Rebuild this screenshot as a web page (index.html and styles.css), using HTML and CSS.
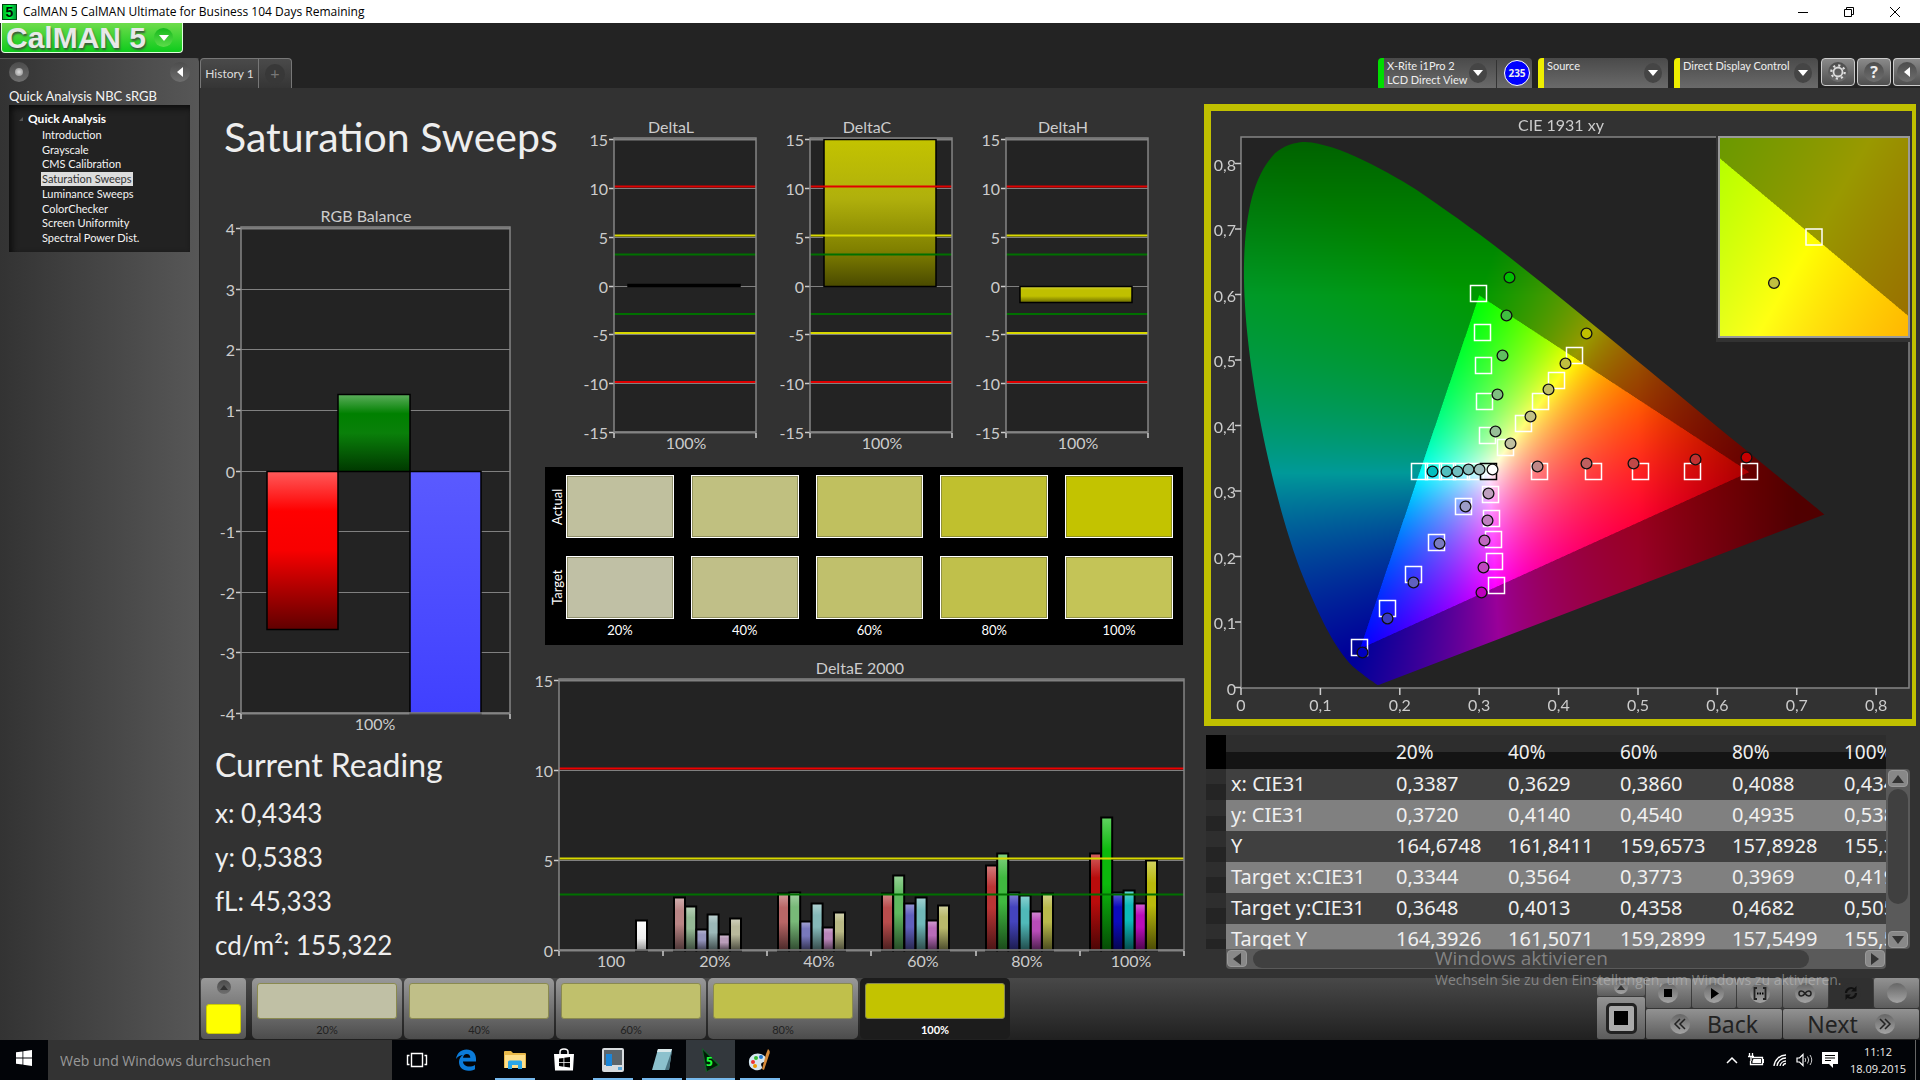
FILE: index.html
```html
<!DOCTYPE html>
<html lang="en">
<head>
    <meta charset="utf-8" />
    <meta name="viewport" content="width=device-width, initial-scale=1" />
    <title>CalMAN 5 CalMAN Ultimate for Business</title>
    <link rel="stylesheet" href="styles.css">
</head>
<body>
    <div class="titlebar">
        <span class="app-icon">5</span>
        <span class="titlebar-text">CalMAN 5 CalMAN Ultimate for Business 104 Days Remaining</span>
        <div class="window-buttons">
            <button aria-label="Minimize"><svg width="12" height="12" viewBox="0 0 12 12"><path d="M1 6.5h10" stroke="#000" fill="none"/></svg></button>
            <button aria-label="Restore"><svg width="12" height="12" viewBox="0 0 12 12"><path d="M1.5 3.5h7v7h-7zM3.5 3.5v-2h7v7h-2" stroke="#000" fill="none"/></svg></button>
            <button aria-label="Close"><svg width="12" height="12" viewBox="0 0 12 12"><path d="M1 1l10 10M11 1L1 11" stroke="#000" fill="none"/></svg></button>
        </div>
    </div>

    <div class="brand-row">
        <button class="brand">
            <span class="brand-name">CalMAN 5</span>
            <span class="brand-arrow"><i class="caret"></i></span>
        </button>
    </div>

    <div class="app">
        <aside class="sidebar">
            <div class="sidebar-top">
                <button class="round" aria-label="Pin"><i class="dot"></i></button>
                <button class="round" aria-label="Collapse"><i class="caret-left"></i></button>
            </div>
            <p class="sidebar-title">Quick Analysis NBC sRGB</p>
            <nav class="tree">
                <div class="tree-head"><i class="tree-mark"></i>Quick Analysis</div>
                <ul>
                    <li><a href="#">Introduction</a></li>
                    <li><a href="#">Grayscale</a></li>
                    <li><a href="#">CMS Calibration</a></li>
                    <li><a href="#" class="selected">Saturation Sweeps</a></li>
                    <li><a href="#">Luminance Sweeps</a></li>
                    <li><a href="#">ColorChecker</a></li>
                    <li><a href="#">Screen Uniformity</a></li>
                    <li><a href="#">Spectral Power Dist.</a></li>
                </ul>
            </nav>
        </aside>

        <div class="workspace">
            <div class="toolbar">
                <div class="tabs">
                    <button class="tab">History 1</button>
                    <button class="tab tab-add" aria-label="Add history"><span>+</span></button>
                </div>
                <div class="devices">
                    <div class="device device-meter">
                        <button class="device-button">X-Rite i1Pro 2<br>LCD Direct View</button>
                        <span class="drop"><i class="caret"></i></span>
                        <span class="level">235</span>
                    </div>
                    <div class="device device-source">
                        <select aria-label="Source"><option>Source</option></select>
                        <span class="drop"><i class="caret"></i></span>
                    </div>
                    <div class="device device-display">
                        <select aria-label="Display control"><option>Direct Display Control</option></select>
                        <span class="drop"><i class="caret"></i></span>
                    </div>
                    <button class="tool" aria-label="Settings"><span class="round">
                        <svg width="18" height="18" viewBox="0 0 18 18"><circle cx="9" cy="9" r="4.5" fill="none" stroke="#ddd" stroke-width="1.8"/><circle cx="9" cy="9" r="6.7" fill="none" stroke="#ddd" stroke-width="2.2" stroke-dasharray="2.2 3.06"/></svg>
                    </span></button>
                    <button class="tool tool-help" aria-label="Help"><span class="round">?</span></button>
                    <button class="tool tool-edge" aria-label="Collapse"><span class="round"><i class="caret-left"></i></span></button>
                </div>
            </div>

            <main class="content">
                <section class="col-left">
                    <h1>Saturation Sweeps</h1>
                    <svg class="chart" id="rgb-balance" viewBox="0 0 330 530"></svg>
                    <h2>Current Reading</h2>
                    <ul class="reading">
                        <li>x: 0,4343</li>
                        <li>y: 0,5383</li>
                        <li>fL: 45,333</li>
                        <li>cd/m²: 155,322</li>
                    </ul>
                </section>

                <section class="col-mid">
                    <div class="deltas">
                        <svg class="chart" id="delta-l" viewBox="0 0 196 345"></svg>
                        <svg class="chart" id="delta-c" viewBox="0 0 196 345"></svg>
                        <svg class="chart" id="delta-h" viewBox="0 0 196 345"></svg>
                    </div>
                    <div class="swatches">
                        <div class="swatch-labels">
                            <span>Actual</span>
                            <span>Target</span>
                        </div>
                        <div class="swatch-grid">
                            <div class="swatch a20"></div>
                            <div class="swatch a40"></div>
                            <div class="swatch a60"></div>
                            <div class="swatch a80"></div>
                            <div class="swatch a100"></div>
                            <div class="swatch t20"></div>
                            <div class="swatch t40"></div>
                            <div class="swatch t60"></div>
                            <div class="swatch t80"></div>
                            <div class="swatch t100"></div>
                        </div>
                        <div class="swatch-percents">
                            <span>20%</span>
                            <span>40%</span>
                            <span>60%</span>
                            <span>80%</span>
                            <span>100%</span>
                        </div>
                    </div>
                    <svg class="chart chart-de" id="delta-e" viewBox="0 0 656 315"></svg>
                </section>

                <section class="col-right">
                    <div class="cie">
                        <svg class="chart" id="cie" viewBox="0 0 701 608">
                            <foreignObject x="30" y="26" width="668" height="551"><canvas id="gamut" width="668" height="551"></canvas></foreignObject>
                            <rect x="505" y="24" width="196" height="207" fill="#323232"/>
                            <foreignObject x="508" y="26" width="190" height="200"><canvas id="gamut-zoom" width="190" height="200"></canvas></foreignObject>
                        </svg>
                    </div>

                    <div class="readings">
                        <div class="readings-view">
                            <table>
                                <thead>
                                    <tr><th class="mark"></th><th class="name"></th><th>20%</th><th>40%</th><th>60%</th><th>80%</th><th>100%</th></tr>
                                </thead>
                                <tbody>
                                    <tr><td class="mark"></td><td>x: CIE31</td><td>0,3387</td><td>0,3629</td><td>0,3860</td><td>0,4088</td><td>0,4343</td></tr>
                                    <tr><td class="mark"></td><td>y: CIE31</td><td>0,3720</td><td>0,4140</td><td>0,4540</td><td>0,4935</td><td>0,5383</td></tr>
                                    <tr><td class="mark"></td><td>Y</td><td>164,6748</td><td>161,8411</td><td>159,6573</td><td>157,8928</td><td>155,3220</td></tr>
                                    <tr><td class="mark"></td><td>Target x:CIE31</td><td>0,3344</td><td>0,3564</td><td>0,3773</td><td>0,3969</td><td>0,4193</td></tr>
                                    <tr><td class="mark"></td><td>Target y:CIE31</td><td>0,3648</td><td>0,4013</td><td>0,4358</td><td>0,4682</td><td>0,5053</td></tr>
                                    <tr><td class="mark"></td><td>Target Y</td><td>164,3926</td><td>161,5071</td><td>159,2899</td><td>157,5499</td><td>155,5820</td></tr>
                                </tbody>
                            </table>
                        </div>
                        <div class="vscroll">
                            <button aria-label="Scroll up"><i class="arrow-up"></i></button>
                            <span class="thumb"></span>
                            <button aria-label="Scroll down"><i class="arrow-down"></i></button>
                        </div>
                        <div class="hscroll">
                            <button aria-label="Scroll left"><i class="arrow-left"></i></button>
                            <span class="thumb"></span>
                            <button aria-label="Scroll right"><i class="arrow-right"></i></button>
                        </div>
                    </div>
                </section>
            </main>

            <footer class="bottom">
                <button class="current" aria-label="Current color"><span class="round small"><i class="arrow-up"></i></span><span class="current-color"></span></button>
                <div class="steps">
                    <button class="step"><span class="step-color t20"></span>20%</button>
                    <button class="step"><span class="step-color t40"></span>40%</button>
                    <button class="step"><span class="step-color t60"></span>60%</button>
                    <button class="step"><span class="step-color t80"></span>80%</button>
                    <button class="step active"><span class="step-color a100"></span>100%</button>
                </div>
                <div class="transport">
                    <div class="stop-col">
                        <button class="stop-small" aria-label="Expand"><span class="round small"><i class="arrow-up"></i></span></button>
                        <button class="stop-big" aria-label="Stop all"><span><i></i></span></button>
                    </div>
                    <div class="transport-main">
                        <div class="keys">
                            <button aria-label="Stop"><span class="round"><svg width="20" height="20" viewBox="0 0 20 20"><path d="M6 6h8v8H6z"/></svg></span></button>
                            <button aria-label="Play"><span class="round"><svg width="20" height="20" viewBox="0 0 20 20"><path d="M7 5l8 5.500-8 5.500z"/></svg></span></button>
                            <button aria-label="Read series"><span class="round"><svg width="20" height="20" viewBox="0 0 20 20"><path d="M7 5H4.500v11H7M13 5h2.500v11H13" fill="none" stroke="#222" stroke-width="1.8"/><path d="M7 9.500h1.500v2H7zM9.500 9.500H11v2H9.500zM12 9.500h1.500v2H12z"/></svg></span></button>
                            <button aria-label="Read continuous"><span class="round"><svg width="20" height="20" viewBox="0 0 20 20"><path d="M10 10.500C8 7.500 4 7 4 10.500S8 13.500 10 10.500 16 7 16 10.500 12 13.500 10 10.500z" fill="none" stroke="#222" stroke-width="1.6"/></svg></span></button>
                            <button class="pressed" aria-label="Refresh"><span class="round"><svg width="20" height="20" viewBox="0 0 20 20"><path d="M5 10a5 5 0 0 1 8.500-3.500M15 10a5 5 0 0 1-8.500 3.500" fill="none" stroke="#111" stroke-width="2.2"/><path d="M15.500 3v5.500H10zM4.500 17v-5.500H10z" fill="#111"/></svg></span></button>
                            <button aria-label="Blank"><span class="round"></span></button>
                        </div>
                        <div class="keys nav-keys">
                            <button><span class="round"><svg width="18" height="18" viewBox="0 0 18 18"><path d="M9 4L4 9l5 5M14 4L9 9l5 5" fill="none" stroke="#222" stroke-width="1.5"/></svg></span>Back</button>
                            <button>Next<span class="round"><svg width="18" height="18" viewBox="0 0 18 18"><path d="M4 4l5 5-5 5M9 4l5 5-5 5" fill="none" stroke="#222" stroke-width="1.5"/></svg></span></button>
                        </div>
                    </div>
                </div>
            </footer>
        </div>
    </div>

    <div class="watermark">
        <strong>Windows aktivieren</strong>
        <span>Wechseln Sie zu den Einstellungen, um Windows zu aktivieren.</span>
    </div>

    <div class="taskbar">
        <button class="start" aria-label="Start"><svg width="16" height="16" viewBox="0 0 16 16"><path d="M0 2.300L6.500 1.400v6.200H0zM7.300 1.300L16 0v7.600H7.300zM0 8.400h6.500v6.200L0 13.700zM7.300 8.400H16V16l-8.700-1.300z" fill="#fff"/></svg></button>
        <input class="search" type="text" placeholder="Web und Windows durchsuchen" aria-label="Web und Windows durchsuchen">
        <div class="task-icons">
            <button aria-label="Task view"><svg width="22" height="16" viewBox="0 0 22 16"><path d="M5.500 1.500h11v13h-11zM3.500 3.500h-2v9h2M18.500 3.500h2v9h-2" fill="none" stroke="#fff" stroke-width="1.4"/></svg></button>
            <button aria-label="Edge"><svg width="22" height="22" viewBox="0 0 22 22"><path d="M1 10C2 4 6 .5 11.500.5 17.500.5 21 4.500 21 10v2.500H8c.2 3.500 3 5 6.200 5 2.200 0 4-.6 5.800-1.600v4.300c-2 1-4.200 1.500-6.700 1.500C7.500 21.700 4 18 4 13c0-3 1.500-5.500 4-7C5 6.300 2.500 7.800 1 10zm7-1.200h7.300C15.300 6.500 14 5 11.800 5S8.300 6.500 8 8.800z" fill="#0b7bd8"/></svg></button>
            <button class="open" aria-label="Explorer"><svg width="22" height="20" viewBox="0 0 22 20"><path d="M0 2q0-1 1-1h6l2 2h12q1 0 1 1v14H0z" fill="#e8b94a"/><path d="M1 5h20v13H1z" fill="#fddf8b"/><path d="M4 19v-7q0-1.500 1.500-1.500h11Q18 10.500 18 12v7h-4v-4H8v4z" fill="#2ba7e8"/></svg></button>
            <button aria-label="Store"><svg width="22" height="24" viewBox="0 0 22 24"><path d="M7 7V4q0-3 4-3t4 3v3" fill="none" stroke="#fff" stroke-width="1.5"/><path d="M1 6h20l-1 16.500H2z" fill="#fff"/><path d="M6 10.500l4.500-.6v4H6zM11.300 9.800L17 9v4.900h-5.700zM6 14.700h4.500v4L6 18.100zM11.300 14.700H17v4.900l-5.700-.8z" fill="#000"/></svg></button>
            <button class="open" aria-label="Device"><svg width="22" height="24" viewBox="0 0 22 24"><rect width="22" height="24" rx="2" fill="#d8dcdf"/><path d="M2 2h18v15H2z" fill="#5c656b"/><path d="M4 6h6v12H4z" fill="#1c86d8"/><path d="M12 20h3M16 19h4v3h-4z" fill="#5aa9dc"/></svg></button>
            <button class="open" aria-label="Notepad"><svg width="22" height="24" viewBox="0 0 22 24"><path d="M7 1h14l-3 21H1z" fill="#8cc1cd"/><path d="M7 1h14l-1 3H6z" fill="#d9e8ea"/><path d="M21 2l-3 20h-4z" fill="#4a7380"/></svg></button>
            <button class="open focused" aria-label="CalMAN"><svg width="22" height="24" viewBox="0 0 22 24"><path d="M2 0l18 17-14 7z" fill="#0a6a24"/><path d="M3 2l15 15-11 6z" fill="#021c08"/><text x="6" y="18" font-size="12" font-weight="bold" fill="#1fff3a">5</text></svg></button>
            <button class="open" aria-label="Paint"><svg width="24" height="24" viewBox="0 0 24 24"><path d="M1 15C0 8 7 4 13 6s7 7 3 8-3 3-2 5-5 5-9 2q-4-2-4-6z" fill="#d5e6f0"/><circle cx="5" cy="14" r="2" fill="#e33"/><circle cx="8" cy="10" r="2" fill="#3b3"/><circle cx="13" cy="9" r="2" fill="#27c"/><circle cx="7" cy="18" r="2" fill="#e90"/><path d="M20 1q3 2 1 6l-5 15-2-1 4-15z" fill="#d68b3a"/></svg></button>
        </div>
        <div class="tray">
            <svg width="12" height="8" viewBox="0 0 12 8"><path d="M1 7l5-5 5 5" fill="none" stroke="#fff" stroke-width="1.5"/></svg>
            <svg width="17" height="14" viewBox="0 0 17 14"><path d="M5 4.500h10.500v7H3.500V8M2.500 0v3M5.500 0v3M1 3.500h6M4 4v4" fill="none" stroke="#fff" stroke-width="1.3"/><path d="M6.500 6h7.500v4H5.500V8z" fill="#fff"/><path d="M16 6h1v4h-1z" fill="#fff"/></svg>
            <svg width="14" height="14" viewBox="0 0 14 14"><path d="M1 13A12 12 0 0 1 13 2M4 13a9 9 0 0 1 9-8M7 13a6 6 0 0 1 6-5M10 13a3 3 0 0 1 3-2.500" fill="none" stroke="#fff" stroke-width="1.3"/></svg>
            <svg width="17" height="14" viewBox="0 0 17 14"><path d="M1 5h2.500L7 1.500v11L3.500 9H1z" fill="none" stroke="#fff" stroke-width="1.2"/><path d="M9 5q1.500 2 0 4M11.500 3.500q2.500 3.500 0 7M14 2q3.500 5 0 10" fill="none" stroke="#ccc"/></svg>
            <svg width="16" height="16" viewBox="0 0 16 16"><path d="M0 0h16v12h-5v4l-4-4H0z" fill="#fff"/><path d="M3 3.500h10M3 6h10M3 8.500h6" stroke="#000" stroke-width="1.2"/></svg>
            <div class="clock">11:12<br>18.09.2015</div>
            <span class="show-desktop"></span>
        </div>
    </div>

    <script src="charts.js"></script>
</body>
</html>
```
FILE: styles.css
```css
* {
    box-sizing: border-box;
}

body {
    margin: 0;
    min-height: 100vh;
    display: flex;
    flex-direction: column;
    background: #232323;
    color: #eee;
    font-family: Lato, "Open Sans", sans-serif;
    font-size: 12px;
}

button,
select,
input {
    font: inherit;
    color: inherit;
    border: 0;
    padding: 0;
    background: none;
}

h1,
h2,
p,
ul {
    margin: 0;
    padding: 0;
    font-weight: 400;
    list-style: none;
}

a {
    color: inherit;
    text-decoration: none;
}

canvas {
    display: block;
}

/* window title */
.titlebar {
    height: 23px;
    display: flex;
    align-items: center;
    background: #fff;
    color: #000;
    font-family: "Open Sans", sans-serif;
}

.app-icon {
    width: 15px;
    height: 16px;
    margin: 0 6px 0 2px;
    background: linear-gradient(90deg, #0b2, #0f4, #093);
    border: 1px solid #041;
    color: #010;
    font: bold 14px/14px "Liberation Sans", sans-serif;
    text-align: center;
}

.window-buttons {
    margin: 0 2px 0 auto;
    display: flex;
}

.window-buttons button {
    width: 46px;
    height: 23px;
    display: flex;
    align-items: center;
    justify-content: center;
}

/* shared shapes */
.caret {
    border: 5px solid transparent;
    border-top: 6px solid #fff;
    border-bottom: 0;
}

.caret-left {
    border: 5px solid transparent;
    border-right: 6px solid #fff;
    border-left: 0;
}

.round {
    width: 20px;
    height: 20px;
    border-radius: 50%;
    display: flex;
    align-items: center;
    justify-content: center;
    background: linear-gradient(#4c4c4c, #6e6e6e);
}

.round.small {
    width: 14px;
    height: 14px;
}

.arrow-up,
.arrow-down {
    border: 6px solid transparent;
}

.arrow-up {
    border-bottom: 8px solid #333;
    border-top: 0;
}

.arrow-down {
    border-top: 8px solid #333;
    border-bottom: 0;
}

.arrow-left,
.arrow-right {
    border: 6px solid transparent;
}

.arrow-left {
    border-right: 8px solid #333;
    border-left: 0;
}

.arrow-right {
    border-left: 8px solid #333;
    border-right: 0;
}

.small .arrow-up {
    border-width: 0 4px 5px;
}

/* brand */
.brand-row {
    height: 35px;
}

.brand {
    width: 182px;
    height: 30px;
    margin-left: 1px;
    padding: 0 9px 0 4px;
    display: flex;
    align-items: center;
    justify-content: space-between;
    background: linear-gradient(#6fdc4c, #0ecb1c);
    border: 1px solid #dfffdc;
    border-top: 0;
    border-radius: 0 0 4px 4px;
}

.brand-name {
    font: bold 30px/28px "Liberation Sans", sans-serif;
    color: #e8e8e8;
    text-shadow: 1px 2px 2px #3a5a3a;
}

.brand-arrow {
    width: 19px;
    height: 19px;
    border-radius: 50%;
    background: linear-gradient(#14b81c, #5ddc4a);
    display: flex;
    align-items: center;
    justify-content: center;
}

.app {
    flex: 1;
    display: flex;
}

/* sidebar */
.sidebar {
    width: 200px;
    flex: none;
    padding: 0 9px;
    background: linear-gradient(90deg, #333, #575757);
    border-right: 1px solid #222;
    border-top: 1px solid #555;
    border-top-right-radius: 4px;
}

.sidebar-top {
    display: flex;
    justify-content: space-between;
    height: 28px;
    padding-top: 3px;
}

.dot {
    width: 8px;
    height: 8px;
    border-radius: 50%;
    background: radial-gradient(#ddd, #888);
}

.sidebar-title {
    font-size: 13px;
    line-height: 18px;
    color: #f4f4f4;
}

.tree {
    height: 147px;
    padding: 5px 0 0 10px;
    background: #222;
    box-shadow: inset 3px 3px 6px #0c0c0c;
}

.tree-head {
    display: flex;
    align-items: center;
    gap: 5px;
    font-weight: 700;
    line-height: 18px;
    color: #fff;
}

.tree-mark {
    border: 2px solid #555;
    border-left-color: transparent;
    border-top-color: transparent;
}

.tree ul {
    height: 117px;
    padding-left: 22px;
    display: flex;
    flex-direction: column;
    justify-content: space-between;
}

.tree li {
    height: 14px;
    line-height: 14px;
    font-size: 11px;
}

.tree a {
    display: inline-block;
    padding: 0 1px;
    color: #f4f4f4;
}

.tree .selected {
    background: #ddd;
    color: #333;
}

/* toolbar */
.workspace {
    flex: 1;
    min-width: 0;
    display: flex;
    flex-direction: column;
}

.toolbar {
    height: 30px;
    display: flex;
    justify-content: space-between;
}

.tabs,
.devices {
    display: flex;
}

.tab {
    width: 59px;
    background: linear-gradient(#4a4a4a, #353535);
    border: 1px solid #777;
    border-bottom: 0;
    border-radius: 4px 0 0 0;
    color: #ddd;
}

.tab-add {
    width: 33px;
    border-left: 0;
    border-radius: 0 4px 0 0;
    color: #777;
    font-size: 16px;
}

.tab-add span {
    display: inline-block;
    width: 20px;
    height: 20px;
    line-height: 18px;
    border-radius: 50%;
    background: #383838;
}

.device {
    display: flex;
    align-items: center;
    margin-right: 6px;
    padding-left: 3px;
    border-left: 6px solid #ee0;
    border-radius: 4px 4px 0 0;
    background: linear-gradient(#4a4a4a, #6a6a6a);
}

.device-meter {
    width: 154px;
    border-left-color: #0d0;
}

.device-source {
    width: 130px;
}

.device-display {
    width: 144px;
    margin-right: 3px;
}

.device-button,
.device select {
    flex: 1;
    min-width: 0;
    height: 28px;
    text-align: left;
    font-size: 11px;
    line-height: 14px;
    white-space: nowrap;
    appearance: none;
}

.device select {
    padding-bottom: 14px;
}

.device .drop {
    width: 18px;
    height: 20px;
    margin-right: 6px;
    border-radius: 50%;
    background: #454545;
    display: flex;
    align-items: center;
    justify-content: center;
}

.device-meter .drop {
    margin-right: 10px;
}

.level {
    width: 26px;
    height: 26px;
    margin-right: 2px;
    border: 1px solid #fff;
    border-radius: 50%;
    background: #00f;
    font: bold 10px/24px "Open Sans", sans-serif;
    text-align: center;
}

/* divider between the meter menu and its level */
.device-meter .level {
    margin-left: 7px;
    outline: 0;
}

.device-meter {
    background: linear-gradient(#333, #333) 112px 2px / 1px 28px no-repeat, linear-gradient(#4a4a4a, #6a6a6a);
}

.tool {
    width: 34px;
    height: 28px;
    margin-right: 2px;
    display: flex;
    align-items: center;
    justify-content: center;
    background: linear-gradient(#8a8a8a, #4e4e4e);
    border: 1px solid #ccc;
    border-radius: 4px;
    font: bold 16px "Open Sans", sans-serif;
}

.tool-edge {
    width: 27px;
    margin-right: 0;
    border-right: 0;
    border-radius: 4px 0 0 4px;
}

/* content */
.content {
    flex: 1;
    display: grid;
    grid-template-columns: minmax(0, 330fr) minmax(0, 674fr) minmax(0, 716fr);
    background: #323232;
}

.chart {
    display: block;
    width: 100%;
    fill: #ccc;
    font-size: 16px;
}

.col-left,
.col-mid {
    padding-top: 22px;
}

h1 {
    margin: 0 0 40px 24px;
    font-size: 41px;
    line-height: 54px;
    white-space: nowrap;
}

h2 {
    margin: 9px 0 4px 15px;
    font-size: 32px;
    line-height: 44px;
}

.reading {
    margin-left: 15px;
    font-size: 26px;
    line-height: 44px;
}

.col-mid {
    padding-right: 18px;
}

.deltas {
    display: flex;
    padding: 0 16px 0 52px;
}

.deltas .chart {
    flex: 1;
    min-width: 0;
}

.swatches {
    height: 178px;
    margin: 12px 3px 0 15px;
    padding: 8px 10px 0 0;
    display: grid;
    grid-template-columns: 21px 1fr;
    grid-template-rows: 144px 26px;
    background: #000;
    color: #fff;
    font-size: 13px;
}

.swatch-labels {
    display: flex;
    flex-direction: column;
    gap: 18px;
}

.swatch-labels span {
    height: 63px;
    writing-mode: vertical-rl;
    transform: rotate(180deg);
    text-align: center;
    line-height: 25px;
}

.swatch-grid,
.swatch-percents {
    display: grid;
    grid-template-columns: repeat(5, 1fr);
    column-gap: 17px;
}

.swatch-grid {
    grid-template-rows: 63px 63px;
    row-gap: 18px;
}

.swatch-percents {
    grid-column: 2;
    line-height: 22px;
    text-align: center;
}

.swatch {
    border: 1px solid #fff;
    box-shadow: inset 0 0 0 1px rgba(100, 100, 60, 0.5);
}

.a20 { background: #c0c09e; }
.a40 { background: #c0c080; }
.a60 { background: #c0c05f; }
.a80 { background: #c0c02e; }
.a100 { background: #c3c300; }
.t20 { background: #c0c0a5; }
.t40 { background: #c0bf88; }
.t60 { background: #c0c06c; }
.t80 { background: #c0c04b; }
.t100 { background: #c4c457; }

.chart-de {
    margin-top: 10px;
}

/* cie */
.col-right {
    padding: 16px 4px 0 0;
}

.cie {
    border: 7px solid #c0c000;
    border-right-width: 4px;
}

/* readings table */
.readings {
    margin: 9px 6px 0 2px;
    display: grid;
    grid-template-columns: minmax(0, 1fr) 24px;
}

.readings-view {
    height: 214px;
    overflow: hidden;
}

.readings table {
    width: 745px;
    table-layout: fixed;
    border-collapse: collapse;
    font: 20px/30px "Noto Sans", sans-serif;
    color: #f0f0f0;
}

.readings th,
.readings td {
    height: 31px;
    padding: 0 0 1px 5px;
    text-align: left;
    font-weight: 400;
    white-space: nowrap;
}

.readings th {
    width: 112px;
    height: 34px;
    font-size: 19px;
    background: linear-gradient(#2d2d2d 50%, #141414 50%);
}

.readings th.name {
    width: 165px;
}

.readings th.mark {
    width: 20px;
    background: #000;
}

.readings tbody tr {
    background: #404040;
}

.readings tbody tr:nth-child(even) {
    background: #808080;
}

.readings td.mark {
    background: linear-gradient(#2e2e2e 50%, #242424 50%);
}

.vscroll,
.hscroll {
    display: flex;
    justify-content: space-between;
    background: #5a5a5a;
}

.vscroll {
    flex-direction: column;
    margin-top: 34px;
    padding: 1px 2px;
    border-radius: 0 4px 4px 0;
}

.hscroll {
    height: 20px;
    margin-left: 20px;
    padding: 1px;
    border-radius: 0 0 4px 4px;
}

.vscroll button,
.hscroll button {
    width: 20px;
    height: 17px;
    display: flex;
    align-items: center;
    justify-content: center;
    background: #888;
    border: 1px solid #999;
    border-radius: 4px;
}

.vscroll .thumb {
    width: 20px;
    height: 115px;
    margin-bottom: 26px;
    border-radius: 10px;
    background: #404040;
}

.hscroll .thumb {
    flex: 1;
    margin: 0 56px 0 6px;
    border-radius: 10px;
    background: #404040;
}

/* bottom bar */
.bottom {
    height: 62px;
    display: flex;
    padding: 0 1px 1px;
    background: linear-gradient(#484848, #202020);
}

.current {
    width: 45px;
    display: flex;
    flex-direction: column;
    align-items: center;
    gap: 10px;
    padding-top: 2px;
    background: linear-gradient(#999, #555);
    border-radius: 4px;
}

.current-color {
    width: 35px;
    height: 30px;
    border: 1px solid #cc0;
    border-radius: 3px;
    background: #ff0;
}

.steps {
    flex: 1;
    display: flex;
    gap: 2px;
    margin-left: 6px;
}

.step {
    width: 150px;
    padding: 5px 5px 0;
    background: linear-gradient(#999, #4c4c4c);
    border-radius: 5px;
    color: #222;
    font-size: 11px;
    line-height: 18px;
}

.step.active {
    background: #1c1c1c;
    color: #fff;
    font-weight: 700;
}

.step-color {
    display: block;
    height: 36px;
    margin-bottom: 2px;
    border: 1px solid #8a8a50;
    border-radius: 3px;
}

.transport,
.keys {
    display: flex;
    gap: 1px;
}

.stop-col,
.transport-main {
    display: flex;
    flex-direction: column;
    gap: 1px;
}

.stop-col {
    width: 48px;
}

.transport-main {
    width: 273px;
}

.transport button {
    display: flex;
    align-items: center;
    justify-content: center;
    background: linear-gradient(#929292, #5c5c5c);
    border-radius: 2px;
    color: #222;
}

.stop-small {
    height: 18px;
}

.stop-big {
    height: 42px;
}

.stop-big span {
    width: 31px;
    height: 31px;
    display: flex;
    align-items: center;
    justify-content: center;
    border: 3px solid #222;
    border-radius: 5px;
    background: #aaa;
}

.stop-big i {
    width: 14px;
    height: 14px;
    background: #000;
}

.keys {
    height: 30px;
}

.keys button {
    flex: 1;
}

.transport .round {
    background: linear-gradient(#666, #a4a4a4);
}

.transport .pressed,
.transport .pressed .round {
    background: #303030;
}

.keys.nav-keys button {
    gap: 17px;
    font: 23px "Noto Sans", sans-serif;
}

/* watermark over the window */
.watermark {
    position: absolute;
    right: 76px;
    bottom: 90px;
    width: 409px;
    color: rgba(190, 190, 190, 0.55);
    font-family: "Open Sans", sans-serif;
    font-size: 14px;
    line-height: 20px;
    white-space: nowrap;
    pointer-events: none;
}

.watermark strong {
    display: block;
    font-size: 19px;
    font-weight: 400;
    line-height: 24px;
}

/* taskbar */
.taskbar {
    height: 40px;
    display: flex;
    background: #020408;
    font-family: "Open Sans", sans-serif;
}

.start {
    width: 48px;
}

.search {
    width: 344px;
    padding-left: 12px;
    background: #333;
    font-size: 14px;
}

.search::placeholder {
    color: #999;
}

.task-icons {
    display: flex;
}

.task-icons button {
    width: 49px;
    display: flex;
    align-items: center;
    justify-content: center;
}

.task-icons .open {
    background: linear-gradient(#76b9ed, #76b9ed) center bottom / 40px 2px no-repeat;
}

.task-icons .focused {
    background: linear-gradient(#76b9ed, #76b9ed) center bottom / 49px 2px no-repeat #33383d;
}

.tray {
    margin-left: auto;
    display: flex;
    align-items: center;
    gap: 9px;
}

.clock {
    width: 62px;
    margin: 0 6px 0 0;
    line-height: 17px;
    font-size: 11px;
    text-align: center;
}

.show-desktop {
    width: 5px;
    height: 40px;
    margin-left: -9px;
    border-left: 1px solid #666;
}
```
FILE: charts.js
```js
const NS = 'http://www.w3.org/2000/svg';

function add(parent, tag, attrs, text) {
    const el = document.createElementNS(NS, tag);
    for (const key in attrs) el.setAttribute(key, attrs[key]);
    if (text !== undefined) el.textContent = text;
    parent.appendChild(el);
    return el;
}

function line(svg, x1, y1, x2, y2, color, width) {
    add(svg, 'line', { x1, y1, x2, y2, stroke: color, 'stroke-width': width || 1 });
}

let gradientId = 0;

function glossy(svg, stops) {
    const id = 'bar' + gradientId++;
    const g = add(svg, 'linearGradient', { id, x1: 0, y1: 0, x2: 0, y2: 1 });
    stops.forEach(([offset, color]) => add(g, 'stop', { offset, 'stop-color': color }));
    return 'url(#' + id + ')';
}

function shade(hex, k) {
    const n = [1, 3, 5].map(i => parseInt(hex.substr(i, 2), 16));
    return 'rgb(' + n.map(v => Math.round(k > 0 ? v + (255 - v) * k : v * (1 + k))).join(',') + ')';
}

function fade(color) {
    return [[0, shade(color, 0.35)], [0.25, color], [0.5, color], [1, shade(color, -0.6)]];
}

function drawChart(id, o) {
    const svg = document.getElementById(id);
    const { left, right, top, bottom } = o.plot;
    const y = v => Math.round(bottom - (v - o.min) / (o.max - o.min) * (bottom - top)) + 0.5;

    add(svg, 'text', { x: o.titleX, y: top - 6, 'text-anchor': 'middle' }, o.title);
    add(svg, 'rect', { x: left, y: top - 1, width: right - left, height: bottom - top + 1, fill: '#232323' });
    for (let v = o.min; v <= o.max; v += o.step) {
        line(svg, left, y(v), right, y(v), '#808080', v === o.min || v === o.max ? 2 : 1);
        line(svg, left - 5, y(v), left, y(v), '#ccc', 1.5);
        add(svg, 'text', { x: left - 6, y: y(v) + 6, 'text-anchor': 'end' }, v);
    }
    o.bars.forEach(b => {
        const y1 = Math.max(y(b.to), top - 0.5);
        const y2 = Math.max(y(b.from || 0), y1 + 1);
        add(svg, 'rect', {
            x: b.x, y: y1, width: b.w, height: y2 - y1,
            fill: glossy(svg, b.stops), stroke: '#000', 'stroke-width': b.w > 20 ? 1.5 : 2
        });
    });
    (o.limits || []).forEach(([v, color]) => {
        const ly = y(v) - (v > 0 ? 2 : 1.5);
        line(svg, left, ly, right, ly, color, 2);
    });
    add(svg, 'rect', { x: left, y: top - 1, width: right - left, height: bottom - top + 1, fill: 'none', stroke: '#858585', 'stroke-width': 1.5 });
    o.ticks.forEach(x => line(svg, x, bottom + 1, x, bottom + 6, '#ccc', 1.5));
    o.labels.forEach(([x, text]) => add(svg, 'text', { x, y: bottom + 17, 'text-anchor': 'middle' }, text));
}

drawChart('rgb-balance', {
    title: 'RGB Balance', titleX: 166, min: -4, max: 4, step: 1,
    plot: { left: 41, right: 310, top: 24, bottom: 509 },
    bars: [
        { x: 67, w: 71, from: -2.62, to: 0, stops: [[0, '#ff5a5a'], [0.25, '#ff0000'], [0.5, '#f80000'], [1, '#600000']] },
        { x: 138, w: 72, from: 0, to: 1.26, stops: [[0, '#5cae5c'], [0.25, '#008000'], [0.5, '#0a800a'], [1, '#003800']] },
        { x: 210, w: 71, from: -4, to: 0, stops: [[0, '#5a5aff'], [1, '#4040ff']] }
    ],
    ticks: [41, 310], labels: [[175, '100%']]
});

const deltaLimits = [[10, '#e00000'], [5, '#d8d800'], [3, '#007000'], [-3, '#007000'], [-5, '#d8d800'], [-10, '#e00000']];

[
    ['delta-l', 'DeltaL', { from: 0, to: 0.15, stops: [[0, '#000'], [1, '#000']] }],
    ['delta-c', 'DeltaC', { from: 0, to: 15, stops: [[0, '#c3c300'], [0.4, '#b0b00c'], [0.75, '#808000'], [1, '#4a4a00']] }],
    ['delta-h', 'DeltaH', { from: -1.7, to: 0, stops: [[0, '#d0d040'], [0.2, '#c0c000'], [0.6, '#c0c000'], [1, '#6a6a00']] }]
].forEach(([id, title, bar]) => drawChart(id, {
    title, titleX: 89, min: -15, max: 15, step: 5,
    plot: { left: 32, right: 174, top: 29, bottom: 322 },
    bars: [Object.assign({ x: 46, w: 112 }, bar)],
    limits: deltaLimits, ticks: [32, 174], labels: [[104, '100%']]
}));

const deltaE = [
    { level: '20%', values: [2.93, 2.43, 1.15, 1.98, 0.91, 1.76], colors: ['#b98585', '#95b995', '#9595bd', '#9cb9b9', '#b99cb9', '#b9b99c'] },
    { level: '40%', values: [3.15, 3.22, 1.59, 2.6, 1.26, 2.1], colors: ['#b96666', '#78b978', '#7878bd', '#85b9b9', '#b985b9', '#b9b985'] },
    { level: '60%', values: [3.15, 4.15, 2.6, 2.93, 1.65, 2.48], colors: ['#b94c4c', '#5fb95f', '#6060bd', '#70b9b9', '#b96cb9', '#b9b96c'] },
    { level: '80%', values: [4.73, 5.4, 3.22, 3.05, 2.17, 3.15], colors: ['#b93535', '#40b940', '#4444bd', '#50b9b9', '#b94cb9', '#b9b94c'] },
    { level: '100%', values: [5.4, 7.4, 3.22, 3.33, 2.6, 5], colors: ['#b90c0c', '#0cb90c', '#0c0cbd', '#0cb9b9', '#b90cb9', '#b9b90c'] }
];
const groupWidth = 104;
const deltaBars = [{ x: 106, w: 11, to: 1.67, stops: [[0, '#ffffff'], [0.6, '#eeeeee'], [1, '#909090']] }];
deltaE.forEach((group, g) => group.values.forEach((v, i) => {
    deltaBars.push({ x: 40 + groupWidth * (g + 1) + i * 11.2, w: 11, to: v, stops: fade(group.colors[i]) });
}));

drawChart('delta-e', {
    title: 'DeltaE 2000', titleX: 330, min: 0, max: 15, step: 5,
    plot: { left: 29, right: 654, top: 25, bottom: 295 },
    bars: deltaBars,
    limits: [[10, '#ee0000'], [5, '#d8d800'], [3, '#007000']],
    ticks: [29, 133, 237, 341, 446, 550, 654],
    labels: [[81, '100']].concat(deltaE.map((group, g) => [81 + groupWidth * (g + 1), group.level]))
});

/* ---- chromaticity diagram ---- */

const locus = [
    [.1741, .005], [.1714, .0051], [.1644, .0109], [.1566, .0177], [.144, .0297], [.1355, .0399],
    [.1241, .0578], [.1096, .0868], [.0913, .1327], [.0687, .2007], [.0454, .295], [.0235, .4127],
    [.0082, .5384], [.0039, .6548], [.0139, .7502], [.0389, .812], [.0743, .8338], [.1142, .8262],
    [.1547, .8059], [.1929, .7816], [.2296, .7543], [.3016, .6923], [.3731, .6245], [.4441, .5547],
    [.5125, .4866], [.5752, .4242], [.627, .3725], [.6658, .334], [.6915, .3083], [.719, .2809], [.7347, .2653]
];

function chromaColor(x, y) {
    const X = x / y, Z = (1 - x - y) / y;
    const rgb = [
        3.2406 * X - 1.5372 - 0.4986 * Z,
        -0.9689 * X + 1.8758 + 0.0415 * Z,
        0.0557 * X - 0.204 + 1.057 * Z
    ];
    const max = Math.max(...rgb);
    const inside = Math.min(...rgb) >= 0;
    let k = inside ? 255 : 153;
    // the ends of the locus fall off in brightness
    if (x > 0.5) k *= 1 - 0.48 * Math.min((x - 0.5) / 0.2, 1);
    if (y > 0.6) k *= 1 - 0.35 * Math.min((y - 0.6) / 0.23, 1);
    return rgb.map(v => Math.max(v, 0) / max * k);
}

// smooth curve through the locus points (Catmull-Rom), closed by a straight purple line
function traceLocus(ctx, px, py) {
    ctx.beginPath();
    ctx.moveTo(px(locus[0]), py(locus[0]));
    for (let i = 0; i < locus.length - 1; i++) {
        const a = locus[Math.max(i - 1, 0)], b = locus[i], c = locus[i + 1];
        const d = locus[Math.min(i + 2, locus.length - 1)];
        ctx.bezierCurveTo(
            px(b) + (px(c) - px(a)) / 6, py(b) + (py(c) - py(a)) / 6,
            px(c) - (px(d) - px(b)) / 6, py(c) - (py(d) - py(b)) / 6,
            px(c), py(c)
        );
    }
    ctx.closePath();
}

function drawGamut(id, x0, x1, y0, y1) {
    const canvas = document.getElementById(id);
    const w = canvas.width, h = canvas.height;
    const layer = document.createElement('canvas');
    layer.width = w;
    layer.height = h;
    const lctx = layer.getContext('2d');
    const img = lctx.createImageData(w, h);
    for (let j = 0; j < h; j++) {
        for (let i = 0; i < w; i++) {
            // 2x2 samples per pixel keep the gamut triangle's edges smooth
            const sum = [0, 0, 0];
            for (let s = 0; s < 4; s++) {
                const u = i + 0.25 + (s % 2) / 2, v = j + 0.25 + (s >> 1) / 2;
                const c = chromaColor(x0 + u / w * (x1 - x0), y1 - v / h * (y1 - y0));
                c.forEach((value, n) => { sum[n] += value / 4; });
            }
            img.data.set([sum[0], sum[1], sum[2], 255], (j * w + i) * 4);
        }
    }
    lctx.putImageData(img, 0, 0);

    const ctx = canvas.getContext('2d');
    ctx.fillStyle = '#232323';
    ctx.fillRect(0, 0, w, h);
    traceLocus(ctx, p => (p[0] - x0) / (x1 - x0) * w, p => (y1 - p[1]) / (y1 - y0) * h);
    ctx.clip();
    ctx.drawImage(layer, 0, 0);
}

drawGamut('gamut', 0, 0.8413, 0, 0.842);
drawGamut('gamut-zoom', 0.3943, 0.4443, 0.4803, 0.5303);

const cie = document.getElementById('cie');
add(cie, 'text', { x: 350, y: 20, 'text-anchor': 'middle' }, 'CIE 1931 xy');
add(cie, 'path', { d: 'M505 26H30v551h668V231', fill: 'none', stroke: '#858585', 'stroke-width': 1.5 });
for (let i = 0; i <= 8; i++) {
    const label = i ? '0,' + i : '0';
    const x = 30 + i * 79.4, y = 576.5 - i * 65.5;
    line(cie, x, 577, x, 584, '#ccc', 1.5);
    line(cie, 24, y, 30, y, '#ccc', 1.5);
    add(cie, 'text', { x, y: 600, 'text-anchor': 'middle' }, label);
    add(cie, 'text', { x: 25, y: y + 7, 'text-anchor': 'end' }, label);
}

// pixel positions inside the plot area
const targets = [
    [237, 156], [241, 195], [242, 228], [243, 264], [246, 298],
    [333, 218], [315, 243], [299, 264], [282, 286], [264, 310],
    [178, 334], [192, 334], [206, 334], [220, 334], [234, 334],
    [298, 334], [352, 334], [399, 334], [451, 334], [508, 334],
    [249, 357], [250, 381], [252, 402], [253, 424], [255, 448],
    [222, 369], [195, 405], [172, 437], [146, 471], [118, 510]
];
const actuals = [
    [268, 140, '#00bf00'], [265, 178, '#40bf40'], [261, 218, '#60bf60'], [256, 257, '#80bf80'], [254, 294, '#98bf98'],
    [345, 196, '#c0c000'], [324, 226, '#c0c040'], [307, 252, '#c0c066'], [289, 279, '#c0c085'], [269, 306, '#c0c0a0'],
    [191, 334, '#00bfbf'], [205, 334, '#50bfbf'], [216, 334, '#70bfbf'], [227, 332, '#88bfbf'], [238, 332, '#a0bfbf'],
    [296, 329, '#c08888'], [345, 326, '#c06060'], [392, 326, '#c04848'], [454, 322, '#c03030'], [505, 320, '#c80000'],
    [247, 356, '#bfa0bf'], [246, 383, '#bf80bf'], [243, 403, '#bf68bf'], [242, 430, '#bf48bf'], [240, 455, '#bf00bf'],
    [224, 369, '#9c9cc8'], [198, 406, '#7a7ac0'], [172, 445, '#6060c0'], [146, 481, '#3c3cc0'], [121, 515, '#0000c0'],
    [251, 332, '#ffffff']
];

function square(x, y, stroke) {
    add(cie, 'rect', { x: x - 8, y: y - 8, width: 16, height: 16, fill: 'none', stroke, 'stroke-width': 1.5 });
}

function dot(x, y, fill) {
    add(cie, 'circle', { cx: x, cy: y, r: 5.4, fill, stroke: '#111', 'stroke-width': 1.3 });
}

targets.forEach(([x, y]) => square(x + 30.5, y + 26.5, '#fff'));
square(277.5, 360.5, '#000');
actuals.forEach(([x, y, fill]) => dot(x + 30.5, y + 26.5, fill));

// magnified view of the selected point
add(cie, 'rect', { x: 508, y: 26, width: 190, height: 200, fill: 'none', stroke: '#999', 'stroke-width': 2 });
square(603, 126, '#fff');
dot(563, 172, '#c0c040');
```
